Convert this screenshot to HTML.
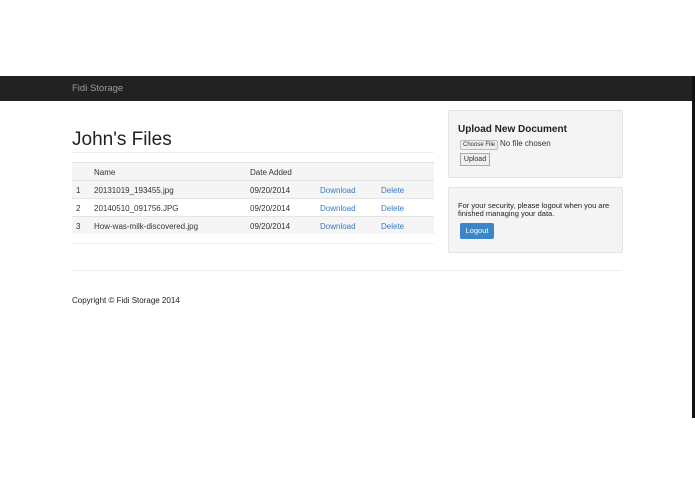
<!DOCTYPE html>
<html><head><style>
body{margin:0;width:695px;height:494px;background:#fff;font-family:"Liberation Sans",sans-serif;position:relative;overflow:hidden;color:#333}
.a{position:absolute}
.nav{left:0;top:76px;width:695px;height:25px;background:#222}
.t{font-size:8px;white-space:nowrap}
.row{left:72px;width:362px;height:17px;background:#f5f5f5;border-top:1px solid #e4e4e4}
.lk{color:#3a7bbf}
.box{background:#f4f4f4;border:1px solid #e3e3e3;border-radius:2px}
</style></head><body>
<div class="a nav"></div>
<div class="a" style="left:72px;top:83px;font-size:9.5px;color:#9d9d9d">Fidi Storage</div>
<div class="a" style="left:692px;top:76px;width:3px;height:342px;background:#111"></div>
<div class="a" style="left:72px;top:129px;font-size:19px;color:#222">John's Files</div>
<div class="a" style="left:72px;top:152px;width:362px;height:1px;background:#eee"></div>
<div class="a row" style="top:162px;height:18px"></div>
<div class="a row" style="top:180px"></div>
<div class="a row" style="top:198px;background:#fff"></div>
<div class="a row" style="top:216px"></div>
<div class="a" style="left:72px;top:243px;width:362px;height:1px;background:#eee"></div>
<div class="a t" style="left:94px;top:168px">Name</div><div class="a t" style="left:250px;top:168px">Date Added</div>
<div class="a t" style="left:76px;top:186px">1</div><div class="a t" style="left:94px;top:186px">20131019_193455.jpg</div><div class="a t" style="left:250px;top:186px">09/20/2014</div><div class="a t lk" style="left:320px;top:186px">Download</div><div class="a t lk" style="left:381px;top:186px">Delete</div>
<div class="a t" style="left:76px;top:204px">2</div><div class="a t" style="left:94px;top:204px">20140510_091756.JPG</div><div class="a t" style="left:250px;top:204px">09/20/2014</div><div class="a t lk" style="left:320px;top:204px">Download</div><div class="a t lk" style="left:381px;top:204px">Delete</div>
<div class="a t" style="left:76px;top:222px">3</div><div class="a t" style="left:94px;top:222px">How-was-milk-discovered.jpg</div><div class="a t" style="left:250px;top:222px">09/20/2014</div><div class="a t lk" style="left:320px;top:222px">Download</div><div class="a t lk" style="left:381px;top:222px">Delete</div>
<div class="a box" style="left:448px;top:110px;width:173px;height:66px"></div>
<div class="a" style="left:458px;top:124px;font-size:10px;font-weight:bold;color:#222">Upload New Document</div>
<div class="a" style="left:460px;top:140px;width:36px;height:8px;border:1px solid #bbb;background:#eee;border-radius:2px;font-size:6px;text-align:center;line-height:8px">Choose File</div>
<div class="a t" style="left:500px;top:139px">No file chosen</div>
<div class="a" style="left:460px;top:153px;width:28px;height:11px;border:1px solid #aaa;background:#eee;font-size:7px;text-align:center;line-height:11px">Upload</div>
<div class="a box" style="left:448px;top:187px;width:173px;height:64px"></div>
<div class="a" style="left:458px;top:202px;font-size:7.5px;line-height:8px;color:#222">For your security, please logout when you are<br>finished managing your data.</div>
<div class="a" style="left:460px;top:223px;width:34px;height:16px;background:#3a86c8;border-radius:2px;color:#fff;font-size:7.5px;text-align:center;line-height:16px">Logout</div>
<div class="a" style="left:72px;top:270px;width:550px;height:1px;background:#eee"></div>
<div class="a t" style="left:72px;top:296px;color:#222">Copyright © Fidi Storage 2014</div>
</body></html>
